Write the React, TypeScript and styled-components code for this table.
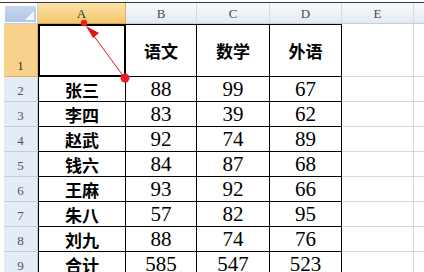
import React from "react";
import styled, {createGlobalStyle, css} from "styled-components";

const GlobalStyle = createGlobalStyle`
html, body { margin: 0; padding: 0; background: #fff; }
body { width: 424px; height: 272px; overflow: hidden; }
`;

const cols = ["A", "B", "C", "D", "E", ""];
const widths = [88, 71, 73, 72, 72, 40];
const heights = [53, 25, 25, 25, 25, 25, 25, 25, 25];

const data: string[][] = [
    ["", "语文", "数学", "外语"],
    ["张三", "88", "99", "67"],
    ["李四", "83", "39", "62"],
    ["赵武", "92", "74", "89"],
    ["钱六", "84", "87", "68"],
    ["王麻", "93", "92", "66"],
    ["朱八", "57", "82", "95"],
    ["刘九", "88", "74", "76"],
    ["合计", "585", "547", "523"],
];

const Sheet = styled.div`
position: relative;
padding-left: 4px;
`;

const TopRule = styled.div`
height: 1px;
margin-top: 2px;
background: #3a3a3a;
`;

const Grid = styled.div`
display: grid;
grid-template-columns: 34px ${widths.map(w => w + "px").join(" ")};
grid-template-rows: 21px ${heights.map(h => h + "px").join(" ")};
`;

const Corner = styled.div`
background: #fff;
border-right: 1px solid #c5cedb;
border-bottom: 1px solid #c5cedb;
box-sizing: border-box;
padding: 3px 1px 1px 1px;
`;

const CornerFill = styled.div`
height: 100%;
background: linear-gradient(#c6d8ee, #aec6e6);
position: relative;
&:after {
    content: "";
    position: absolute;
    right: 2px;
    bottom: 2px;
    width: 0;
    height: 0;
    border-left: 9px solid transparent;
    border-bottom: 9px solid #f4f7fb;
}
`;

const ColHead = styled.div<{ active?: boolean }>`
box-sizing: border-box;
display: flex;
align-items: center;
justify-content: center;
font: 13px "Liberation Serif", serif;
color: #4a4a4a;
border-right: 1px solid #d3d9e2;
border-bottom: 1px solid #c5cedb;
background: linear-gradient(#f7f9fc, #e6ebf2);
padding-top: 2px;
${p => p.active && css`
background: linear-gradient(#fbe3a8, #f5c66c);
border-right-color: #e3b160;
border-bottom-color: #d9a650;
color: #333;
`}
`;

const RowHead = styled.div<{ active?: boolean }>`
box-sizing: border-box;
display: flex;
align-items: flex-end;
justify-content: center;
padding-bottom: 2px;
font: 13px "Liberation Serif", serif;
color: #4c5566;
background: #e4ecf7;
border-right: 1px solid #c5cedb;
border-bottom: 1px solid #c5cedb;
${p => p.active && css`
background: #f8d28c;
border-bottom-color: #e0b060;
border-right-color: #e0b060;
color: #333;
`}
`;

const Cell = styled.div<{ table?: boolean, first?: boolean, top?: boolean, cjk?: boolean }>`
box-sizing: border-box;
display: flex;
align-items: center;
justify-content: center;
color: #000;
border-right: 1px solid #d0d7e5;
border-bottom: 1px solid #d0d7e5;
font: 21px "Liberation Serif", serif;
padding-top: 1px;
${p => p.cjk && css`
font: 700 17px "Noto Sans CJK SC", sans-serif;
padding-top: 0;
`}
${p => p.table && css`
border-right-color: #000;
border-bottom-color: #000;
`}
${p => p.first && css`border-left: 1px solid #000;`}
${p => p.top && css`border-top: 1px solid #000;`}
`;

const Selected = styled(Cell)`
border: 2px solid #000;
box-shadow: inset 0 0 0 1px #fff;
`;

const Arrow = styled.svg`
position: absolute;
left: 0;
top: -3px;
pointer-events: none;
`;

const App: React.FC = () => {
    return <>
        <GlobalStyle/>
        <TopRule/>
        <Sheet>
            <Grid>
                <Corner><CornerFill/></Corner>
                {cols.map((c, i) => <ColHead key={i} active={i === 0}>{c}</ColHead>)}
                {heights.map((_, r) => <React.Fragment key={r}>
                    <RowHead active={r === 0}>{r + 1}</RowHead>
                    {cols.map((c, ci) => {
                        const txt = ci < 4 ? data[r][ci] : "";
                        const cjk = ci === 0 || r === 0;
                        if (r === 0 && ci === 0) return <Selected key={ci} table first top/>;
                        return <Cell key={ci} table={ci < 4} first={ci === 0} top={r === 0 && ci < 4}
                                     cjk={cjk}>{txt}</Cell>;
                    })}
                </React.Fragment>)}
            </Grid>
            <Arrow width={424} height={272} viewBox="0 0 424 272">
                <line x1={124} y1={77} x2={88} y2={28} stroke="#e0141c" strokeWidth={1}/>
                <polygon points="86,26 99,33 93,38" fill="#e0141c"/>
                <circle cx={84} cy={23} r={3.2} fill="#ee1c24"/>
                <circle cx={125} cy={78} r={4.5} fill="#ee1c24"/>
            </Arrow>
        </Sheet>
    </>;
};

export default App;
